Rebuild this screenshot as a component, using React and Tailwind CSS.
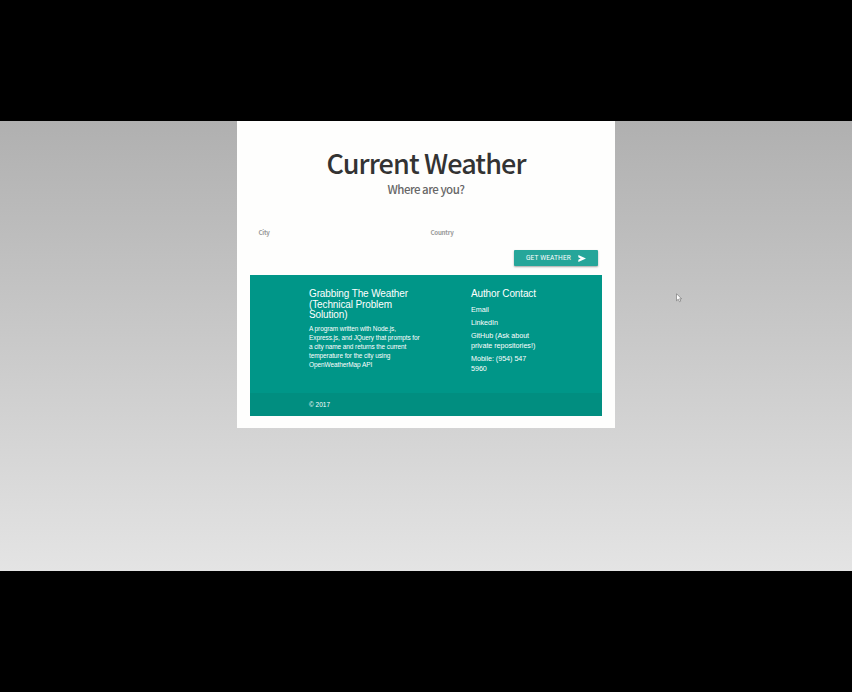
const about = [
  'A program written with Node.js,',
  'Express.js, and JQuery that prompts for',
  'a city name and returns the current',
  'temperature for the city using',
  'OpenWeatherMap API',
];

function Header() {
  return (
    <header className="flex flex-col items-center pt-[22px] font-['Noto_Sans_CJK_SC','Open_Sans',sans-serif] whitespace-nowrap">
      <h1 className="h-[38px] text-[27px] leading-[39px] font-medium tracking-[-0.88px] text-[#333]">Current Weather</h1>
      <h2 className="h-[17px] text-[11.5px] leading-[17px] font-medium tracking-[-0.5px] text-[#666]">Where are you?</h2>
    </header>
  );
}

function SearchForm() {
  return (
    <form className="flex h-[77px] flex-col pt-[30px]">
      <div className="flex pl-[21.5px] font-['Noto_Sans_CJK_SC','Open_Sans',sans-serif] text-[6.2px] leading-[9px] font-bold tracking-[-0.25px] text-[#999]">
        <label className="w-[172px]">City</label>
        <label>Country</label>
      </div>
      <button
        type="button"
        className="mt-[13px] mr-[17px] flex h-4 w-[84px] items-center self-end rounded-[1px] bg-[#26a69a] pl-3 font-['Roboto',sans-serif] text-[6.6px] tracking-[0.12px] whitespace-nowrap text-white shadow-[0_1px_2px_rgba(0,0,0,0.35)]"
      >
        <span className="w-[52px] pt-px text-left">GET WEATHER</span>
        <svg viewBox="0 0 24 21" className="h-[7px] w-2 fill-white">
          <path d="M1 0 24 10.5 1 21V14L8 10.5 1 7z" />
        </svg>
      </button>
    </form>
  );
}

function Footer() {
  return (
    <footer className="mx-[13px] flex h-[141px] w-[352px] flex-col bg-[#009688] font-['Liberation_Sans',Arial,sans-serif] whitespace-nowrap text-white">
      <div className="flex h-[118px] pt-[13px] pl-[59px]">
        <section className="w-[162px] pt-px">
          <h5 className="text-[10px] leading-[10.6px] tracking-[-0.12px]">
            Grabbing The Weather
            <br />
            (Technical Problem
            <br />
            Solution)
          </h5>
          <p className="mt-[4.4px] text-[6.5px] leading-[8.9px] tracking-[-0.1px]">
            {about.map((line) => (
              <span key={line} className="block">{line}</span>
            ))}
          </p>
        </section>
        <section>
          <h5 className="text-[10px] leading-[11px] tracking-[-0.13px]">Author Contact</h5>
          <ul className="mt-[6px] flex flex-col gap-[3.5px] text-[7.2px] leading-[9.7px] tracking-[-0.04px]">
            <li>Email</li>
            <li>LinkedIn</li>
            <li>GitHub (Ask about<br />private repositories!)</li>
            <li>Mobile: (954) 547<br />5960</li>
          </ul>
        </section>
      </div>
      <div className="h-[23px] bg-[#018e80] pl-[59px] text-[6.5px] leading-[23px]">© 2017</div>
    </footer>
  );
}

export default function App() {
  return (
    <div className="relative h-[692px] w-[852px] overflow-hidden bg-black py-[121px]">
      <main className="h-[450px] bg-linear-to-b from-[#b0b0b0] to-[#e4e4e4]">
        <div className="mx-auto h-[307px] w-[378px] bg-[#fefefd]">
          <Header />
          <SearchForm />
          <Footer />
        </div>
      </main>
      <svg viewBox="0 0 12 19" className="absolute top-[293px] left-[675.5px] h-[10px] w-[6px]">
        <path d="M1 1v14l3.5-3.2L7 17l2.5-1.2L7.2 11H11z" fill="white" stroke="#555" strokeWidth="1" />
      </svg>
    </div>
  );
}
